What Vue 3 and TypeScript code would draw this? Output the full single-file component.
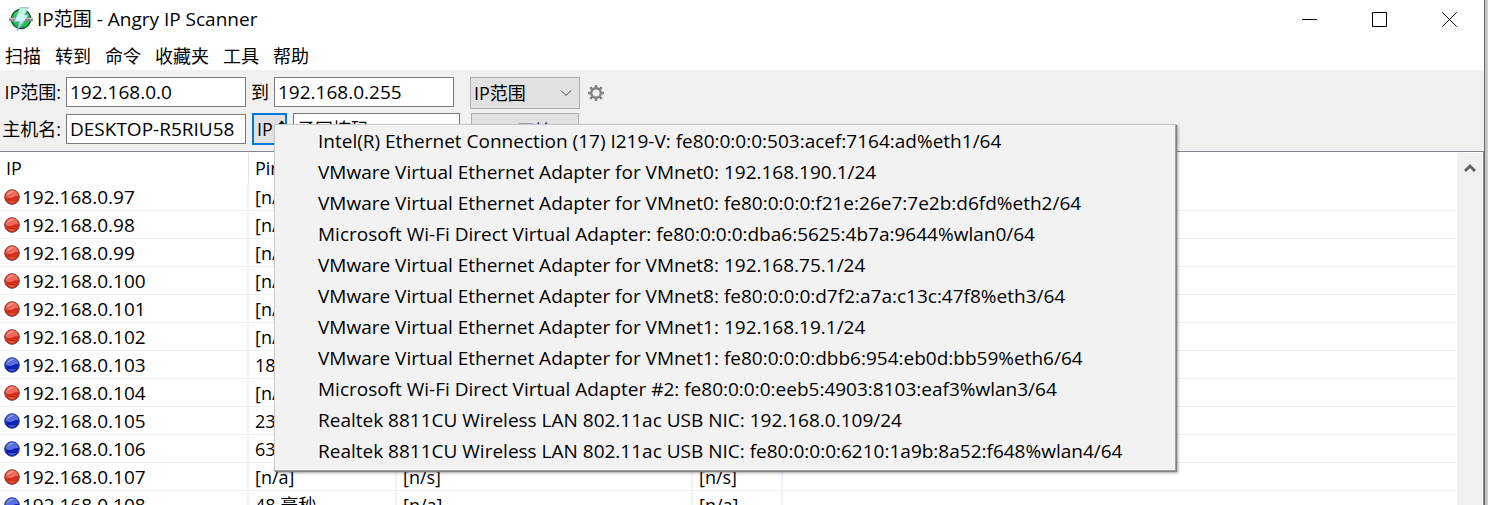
<script setup lang="ts">
interface Host {
  ip: string
  alive: boolean
  ping: string
  name: string
  ports: string
}

const menus: string[] = ['扫描', '转到', '命令', '收藏夹', '工具', '帮助']

const hosts: Host[] = [
  { ip: '192.168.0.97', alive: false, ping: '[n/a]', name: '', ports: '' },
  { ip: '192.168.0.98', alive: false, ping: '[n/a]', name: '', ports: '' },
  { ip: '192.168.0.99', alive: false, ping: '[n/a]', name: '', ports: '' },
  { ip: '192.168.0.100', alive: false, ping: '[n/a]', name: '', ports: '' },
  { ip: '192.168.0.101', alive: false, ping: '[n/a]', name: '', ports: '' },
  { ip: '192.168.0.102', alive: false, ping: '[n/a]', name: '', ports: '' },
  { ip: '192.168.0.103', alive: true, ping: '18', name: '', ports: '' },
  { ip: '192.168.0.104', alive: false, ping: '[n/a]', name: '', ports: '' },
  { ip: '192.168.0.105', alive: true, ping: '23', name: '', ports: '' },
  { ip: '192.168.0.106', alive: true, ping: '63', name: '', ports: '' },
  { ip: '192.168.0.107', alive: false, ping: '[n/a]', name: '[n/s]', ports: '[n/s]' },
  { ip: '192.168.0.108', alive: true, ping: '48 毫秒', name: '[n/a]', ports: '[n/a]' },
]

const adapters: string[] = [
  'Intel(R) Ethernet Connection (17) I219-V: fe80:0:0:0:503:acef:7164:ad%eth1/64',
  'VMware Virtual Ethernet Adapter for VMnet0: 192.168.190.1/24',
  'VMware Virtual Ethernet Adapter for VMnet0: fe80:0:0:0:f21e:26e7:7e2b:d6fd%eth2/64',
  'Microsoft Wi-Fi Direct Virtual Adapter: fe80:0:0:0:dba6:5625:4b7a:9644%wlan0/64',
  'VMware Virtual Ethernet Adapter for VMnet8: 192.168.75.1/24',
  'VMware Virtual Ethernet Adapter for VMnet8: fe80:0:0:0:d7f2:a7a:c13c:47f8%eth3/64',
  'VMware Virtual Ethernet Adapter for VMnet1: 192.168.19.1/24',
  'VMware Virtual Ethernet Adapter for VMnet1: fe80:0:0:0:dbb6:954:eb0d:bb59%eth6/64',
  'Microsoft Wi-Fi Direct Virtual Adapter #2: fe80:0:0:0:eeb5:4903:8103:eaf3%wlan3/64',
  'Realtek 8811CU Wireless LAN 802.11ac USB NIC: 192.168.0.109/24',
  'Realtek 8811CU Wireless LAN 802.11ac USB NIC: fe80:0:0:0:6210:1a9b:8a52:f648%wlan4/64',
]
</script>

<template>
  <div class="desktop">
    <div class="window">
      <header class="titlebar">
        <svg class="app-icon" viewBox="0 0 26 26" aria-hidden="true">
          <defs>
            <linearGradient id="bolt" x1="0" y1="0" x2="0" y2="1">
              <stop offset="0" stop-color="#b4ecd8" />
              <stop offset="0.5" stop-color="#d4fbfb" />
              <stop offset="1" stop-color="#6fa8ee" />
            </linearGradient>
            <radialGradient id="globe" cx="0.5" cy="0.4" r="0.6">
              <stop offset="0" stop-color="#3fdc70" />
              <stop offset="1" stop-color="#14b545" />
            </radialGradient>
          </defs>
          <circle cx="13" cy="13" r="9.7" fill="url(#globe)" stroke="#17402a" stroke-width="1.2" />
          <rect x="1" y="11.500" width="24" height="4" rx="1.500" fill="#8c8c8c" />
          <path d="M1.500 12.500h23" stroke="#c4c4c4" />
          <path d="M12 1.500h8.500l-4 7.500h4L9 25l2.500-9.500H6.500z" fill="url(#bolt)" stroke="#7fb5cf" stroke-width="0.7" />
        </svg>
        <h1 class="title">IP范围 - Angry IP Scanner</h1>
        <div class="controls">
          <button type="button" aria-label="最小化">
            <svg viewBox="0 0 15 15"><path d="M0 7.5h15" /></svg>
          </button>
          <button type="button" aria-label="最大化">
            <svg viewBox="0 0 15 15"><path d="M.5 .5h14v14H.5z" /></svg>
          </button>
          <button type="button" aria-label="关闭">
            <svg viewBox="0 0 15 15"><path d="M.3 .3l14.4 14.4M14.7 .3L.3 14.7" /></svg>
          </button>
        </div>
      </header>

      <nav class="menubar">
        <button v-for="m in menus" :key="m" type="button">{{ m }}</button>
      </nav>

      <section class="toolbar">
        <div class="row">
          <label class="name" for="start">IP范围:</label>
          <input id="start" class="field" type="text" value="192.168.0.0" />
          <label class="to" for="end">到</label>
          <input id="end" class="field" type="text" value="192.168.0.255" />
          <div class="dropdown">
            <select aria-label="IP范围">
              <option>IP范围</option>
            </select>
            <svg class="chevron" viewBox="0 0 12 8"><path d="M1 1.5l5 5 5-5" /></svg>
          </div>
          <button class="gear" type="button" aria-label="选项">
            <svg viewBox="0 0 18 18">
              <circle cx="9" cy="9" r="4.800" />
              <path d="M9 1v3M9 14v3M1 9h3M14 9h3M3.200 3.200l2.200 2.200M12.600 12.600l2.200 2.200M14.800 3.200l-2.200 2.200M5.400 12.600l-2.200 2.200" />
            </svg>
          </button>
        </div>
        <div class="row second">
          <label class="name" for="host">主机名:</label>
          <input id="host" class="field" type="text" value="DESKTOP-R5RIU58" />
          <div class="ip-picker">
            <button class="ip-button" type="button" aria-haspopup="menu" aria-expanded="true">IP↑</button>
            <ul class="popup" role="menu">
              <li v-for="a in adapters" :key="a" role="none">
                <button type="button" role="menuitem">{{ a }}</button>
              </li>
            </ul>
          </div>
          <select class="netmask" aria-label="子网掩码">
            <option>子网掩码</option>
          </select>
          <button class="start" type="button">
            <svg viewBox="0 0 14 14" aria-hidden="true"><path d="M9 0L2 8h4l-2 6 8-8H8z" /></svg>
            开始
          </button>
        </div>
      </section>

      <main class="results">
        <table>
          <colgroup>
            <col class="c-ip" />
            <col class="c-ping" />
            <col class="c-host" />
            <col class="c-ports" />
            <col />
          </colgroup>
          <thead>
            <tr>
              <th>IP</th>
              <th>Ping</th>
              <th></th>
              <th></th>
              <th></th>
            </tr>
          </thead>
          <tbody>
            <tr v-for="h in hosts" :key="h.ip">
              <td>
                <div class="ip-cell">
                  <svg class="ball" :class="{ alive: h.alive }" viewBox="0 0 16 16" aria-hidden="true">
                    <circle class="rim" cx="8" cy="8" r="7.300" />
                    <path class="glow" d="M3.500 12q4.500 3.500 9 0-4.500 1.200-9 0z" />
                    <path class="top" d="M1.600 8a6.400 6.400 0 0 1 12.800-1q-3-.5-5 1-3.500 2-7.800 0z" />
                    <path class="shine" d="M3.500 5.500Q5.500 2.500 9 2.500" />
                  </svg>
                  <span>{{ h.ip }}</span>
                </div>
              </td>
              <td>{{ h.ping }}</td>
              <td>{{ h.name }}</td>
              <td>{{ h.ports }}</td>
              <td></td>
            </tr>
          </tbody>
        </table>
        <div class="scrollbar">
          <button type="button" aria-label="向上滚动">
            <svg viewBox="0 0 12 10"><path d="M1 8l5-5 5 5" /></svg>
          </button>
        </div>
      </main>
    </div>
  </div>
</template>

<style>
body {
  margin: 0;
  overflow: hidden;
}
</style>

<style scoped>
.desktop,
.desktop * {
  box-sizing: border-box;
}

.desktop {
  height: 100vh;
  padding-right: 3px;
  overflow: hidden;
  background: linear-gradient(to left, #d4d2d2, #b4b2b2 4px);
  color: #000;
  font: 18px/24px "Open Sans", "Noto Sans CJK SC", sans-serif;
}

button,
input,
select {
  margin: 0;
  padding: 0;
  border: 0;
  border-radius: 0;
  background: none;
  color: inherit;
  font: inherit;
}

svg {
  display: block;
  fill: none;
}

.window {
  display: flex;
  flex-direction: column;
  height: 100%;
  border-right: 1px solid #6e6e70;
  background: #fff;
}

.titlebar {
  display: flex;
  align-items: center;
  height: 38px;
  padding-left: 8px;
}

.app-icon {
  width: 26px;
  height: 26px;
}

.title {
  margin: 0 auto 0 3px;
  font: inherit;
  font-size: 19px;
}

.controls {
  display: flex;
  height: 100%;
}

.controls button {
  display: grid;
  place-items: center;
  width: 70px;
}

.controls svg {
  width: 15px;
  height: 15px;
  stroke: #000;
}

.menubar {
  display: flex;
  align-items: center;
  gap: 14px;
  height: 32px;
  padding: 4px 5px 0;
}

.toolbar {
  display: flex;
  flex-direction: column;
  gap: 4px;
  height: 81px;
  padding-top: 7px;
  background: #f0f0f0;
}

.row {
  display: flex;
  align-items: flex-start;
  height: 32px;
  line-height: 30px;
}

.row.second {
  align-items: center;
}

.name {
  width: 61px;
  margin-right: 5px;
  text-align: right;
  white-space: nowrap;
}

.field {
  width: 180px;
  height: 30px;
  padding: 0 3px;
  border: 1px solid #7a7a7a;
  background: #fff;
  font-size: 19px;
}

.to {
  margin: 0 5px;
}

.dropdown {
  display: grid;
  align-items: center;
  width: 110px;
  height: 32px;
  margin-left: 16px;
}

.dropdown select {
  grid-area: 1 / 1;
  width: 100%;
  height: 100%;
  padding: 0 3px;
  appearance: none;
  border: 1px solid #adadad;
  background: #e1e1e1;
}

.chevron {
  grid-area: 1 / 1;
  justify-self: end;
  width: 12px;
  height: 8px;
  margin-right: 8px;
  stroke: #404040;
  pointer-events: none;
}

.gear {
  display: flex;
  align-items: center;
  height: 32px;
  margin-left: 7px;
}

.gear svg {
  width: 18px;
  height: 18px;
  stroke: #808080;
  stroke-width: 2.4;
}

.ip-picker {
  position: relative;
  margin: 0 6px;
}

.ip-button {
  display: block;
  width: 35px;
  height: 32px;
  padding-left: 3px;
  overflow: hidden;
  border: 2px solid #0078d7;
  background: #e1e1e1;
  line-height: 28px;
  text-align: left;
  white-space: nowrap;
}

.popup {
  position: absolute;
  z-index: 1;
  top: 11px;
  left: 22px;
  width: 902px;
  margin: 0;
  padding: 2px;
  border: 1px solid #c8c8c8;
  border-right-color: #a0a0a0;
  border-bottom-color: #a0a0a0;
  background: #f2f2f2;
  box-shadow: 1px 1px 1px #808080, 2px 2px 3px #00000050;
  font-size: 19px;
  list-style: none;
}

.popup button {
  display: block;
  width: 100%;
  height: 31px;
  padding: 0 0 2px 41px;
  line-height: 29px;
  text-align: left;
  white-space: nowrap;
}

.netmask {
  width: 167px;
  height: 32px;
  padding: 0 3px;
  appearance: none;
  border: 1px solid #7a7a7a;
  background: #fff;
}

.start {
  display: flex;
  align-items: center;
  justify-content: center;
  gap: 5px;
  width: 108px;
  height: 32px;
  margin-left: 11px;
  padding-top: 4px;
  border: 1px solid #adadad;
  background: #e1e1e1;
}

.start svg {
  width: 14px;
  height: 14px;
  fill: #606060;
}

.results {
  display: flex;
  flex: 1;
  min-height: 0;
  padding: 1px 1px 0 0;
  border-top: 1px solid #828790;
  border-right: 1px solid #828790;
  overflow: hidden;
}

table {
  flex: 1;
  align-self: flex-start;
  margin-right: 1px;
  table-layout: fixed;
  border-spacing: 0;
}

.c-ip {
  width: 249px;
}

.c-ping {
  width: 148px;
}

.c-host {
  width: 296px;
}

.c-ports {
  width: 90px;
}

th,
td {
  padding: 0 0 0 6px;
  text-align: left;
  white-space: nowrap;
}

th {
  height: 30px;
  border-right: 1px solid #e5e5e5;
  font-weight: 400;
}

td {
  height: 28px;
  border-right: 2px solid #edf1fa;
  border-bottom: 1px solid #efefef;
}

td:first-child {
  padding-left: 4px;
}

th:last-child,
td:last-child {
  border-right: 0;
}

.ip-cell {
  display: flex;
  align-items: center;
  gap: 2px;
  font-size: 19px;
}

.ball {
  width: 16px;
  height: 16px;
}

.rim {
  fill: #d42f1a;
  stroke: #7c3a36;
}

.glow {
  fill: #ee6a50;
}

.top {
  fill: #ee6a58;
}

.shine {
  stroke: #f8b0a4;
}

.alive .rim {
  fill: #1020b0;
  stroke: #2c4684;
}

.alive .glow {
  fill: #5a86e8;
}

.alive .top {
  fill: #5a6ee0;
}

.alive .shine {
  stroke: #a8b8f4;
}

.scrollbar {
  width: 25px;
  background: #f0f0f0;
}

.scrollbar button {
  display: grid;
  place-items: center;
  width: 100%;
  height: 30px;
}

.scrollbar svg {
  width: 12px;
  height: 10px;
  stroke: #606060;
  stroke-width: 3;
}
</style>
